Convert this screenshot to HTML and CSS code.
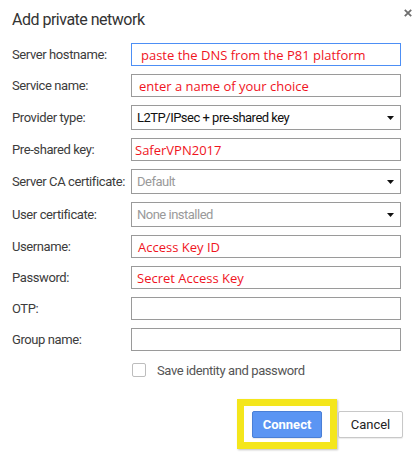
FILE: index.html
```html
<!DOCTYPE html>
<html lang="en">
<head>
<meta charset="utf-8">
<title>Add private network</title>
<link rel="stylesheet" href="styles.css">
</head>
<body>
<div class="dialog">
  <div class="header">
    <h1 class="title">Add private network</h1>
    <span class="close" aria-label="Close">
      <svg width="8" height="8" viewBox="0 0 8 8"><path d="M0.8 0.8 L7.2 7.2 M7.2 0.8 L0.8 7.2" stroke="#6e6e6e" stroke-width="1.8" fill="none"/></svg>
    </span>
  </div>
  <div class="form">
    <div class="label">Server hostname:</div>
    <div class="field text focused"><span class="hint p9">paste the DNS from the P81 platform</span></div>

    <div class="label">Service name:</div>
    <div class="field text"><span class="hint p7">enter a name of your choice</span></div>

    <div class="label">Provider type:</div>
    <div class="field select"><span class="value">L2TP/IPsec + pre-shared key</span><svg class="arrow" width="7" height="4" viewBox="0 0 7 4"><path d="M0 0 H7 L3.5 4 Z" fill="#111"/></svg></div>

    <div class="label">Pre-shared key:</div>
    <div class="field text"><span class="hint p3">SaferVPN2017</span></div>

    <div class="label">Server CA certificate:</div>
    <div class="field select"><span class="value muted">Default</span><svg class="arrow" width="7" height="4" viewBox="0 0 7 4"><path d="M0 0 H7 L3.5 4 Z" fill="#111"/></svg></div>

    <div class="label">User certificate:</div>
    <div class="field select"><span class="value muted">None installed</span><svg class="arrow" width="7" height="4" viewBox="0 0 7 4"><path d="M0 0 H7 L3.5 4 Z" fill="#111"/></svg></div>

    <div class="label">Username:</div>
    <div class="field text"><span class="hint p6">Access Key ID</span></div>

    <div class="label">Password:</div>
    <div class="field text"><span class="hint p5">Secret Access Key</span></div>

    <div class="label">OTP:</div>
    <div class="field text"></div>

    <div class="label">Group name:</div>
    <div class="field text"></div>
  </div>
  <div class="check-row">
    <span class="checkbox"></span>
    <span class="check-label">Save identity and password</span>
  </div>
  <div class="actions">
    <div class="highlight">
      <button class="btn primary">Connect</button>
    </div>
    <button class="btn">Cancel</button>
  </div>
</div>
</body>
</html>
```
FILE: styles.css
```css
* { box-sizing: border-box; }
html, body { margin: 0; padding: 0; background: #fff; }
body { font-family: Roboto, "Liberation Sans", sans-serif; color: #333; }

.dialog {
  width: 419px;
  height: 461px;
  padding: 0 16px 0 12px;
  background: #fff;
}

.header {
  display: flex;
  justify-content: space-between;
  align-items: flex-start;
  height: 43px;
  padding-top: 9px;
  margin-right: -9px;
}
.title {
  margin: 1px 0 0 0;
  font-size: 16px;
  line-height: 20px;
  font-weight: 400;
  letter-spacing: -0.5px;
  color: #333;
}
.close { display: block; width: 8px; height: 8px; }
.close svg { display: block; }

.form {
  display: grid;
  grid-template-columns: 119px 270px;
  row-gap: 8px;
  align-items: center;
}
.label {
  font-size: 13px;
  letter-spacing: -0.4px;
  color: #3c3c3c;
  white-space: nowrap;
}
.field {
  border: 1px solid #9a9a9a;
  display: flex;
  align-items: center;
  background: #fff;
}
.field.text { height: 23px; }
.field.select { height: 25px; padding: 0 6px 0 5px; justify-content: space-between; }
.field.focused { border-color: #4d8ff5; }
.hint {
  font-family: "Open Sans", "Liberation Sans", sans-serif;
  font-size: 13px;
  color: #f0141e;
  white-space: nowrap;
}
.p3 { padding-left: 3px; }
.p5 { padding-left: 5px; }
.p6 { padding-left: 6px; }
.p7 { padding-left: 7px; }
.p9 { padding-left: 9px; }
.value { font-size: 13px; letter-spacing: -0.5px; color: #111; white-space: nowrap; }
.value.muted { color: #9a9a9a; }
.arrow { display: block; }

.check-row {
  display: flex;
  align-items: center;
  margin-top: 12px;
  padding-left: 120px;
  height: 14px;
}
.checkbox {
  width: 14px;
  height: 14px;
  border: 1px solid #bdbdbd;
  border-radius: 2px;
  background: #fff;
}
.check-label {
  margin-left: 11px;
  font-size: 13px;
  letter-spacing: -0.4px;
  color: #555;
}

.actions {
  display: flex;
  justify-content: flex-end;
  align-items: center;
  gap: 1px;
  margin-top: 22px;
}
.highlight {
  border: 7px solid #f4e61c;
  padding: 5px 8px 4px 8px;
  box-shadow: 1px 1px 2px rgba(0,0,0,0.25);
}
.btn {
  font-family: Roboto, "Liberation Sans", sans-serif;
  font-size: 13px;
  height: 27px;
  border: 1px solid #c8c8c8;
  border-radius: 2px;
  background: #fff;
  color: #222;
  padding: 0;
  width: 65px;
  box-shadow: 0 1px 1px rgba(0,0,0,0.08);
}
.btn.primary {
  width: 70px;
  background: #5b95f3;
  border-color: #4a7fd6;
  color: #fff;
  font-weight: 700;
}
```
